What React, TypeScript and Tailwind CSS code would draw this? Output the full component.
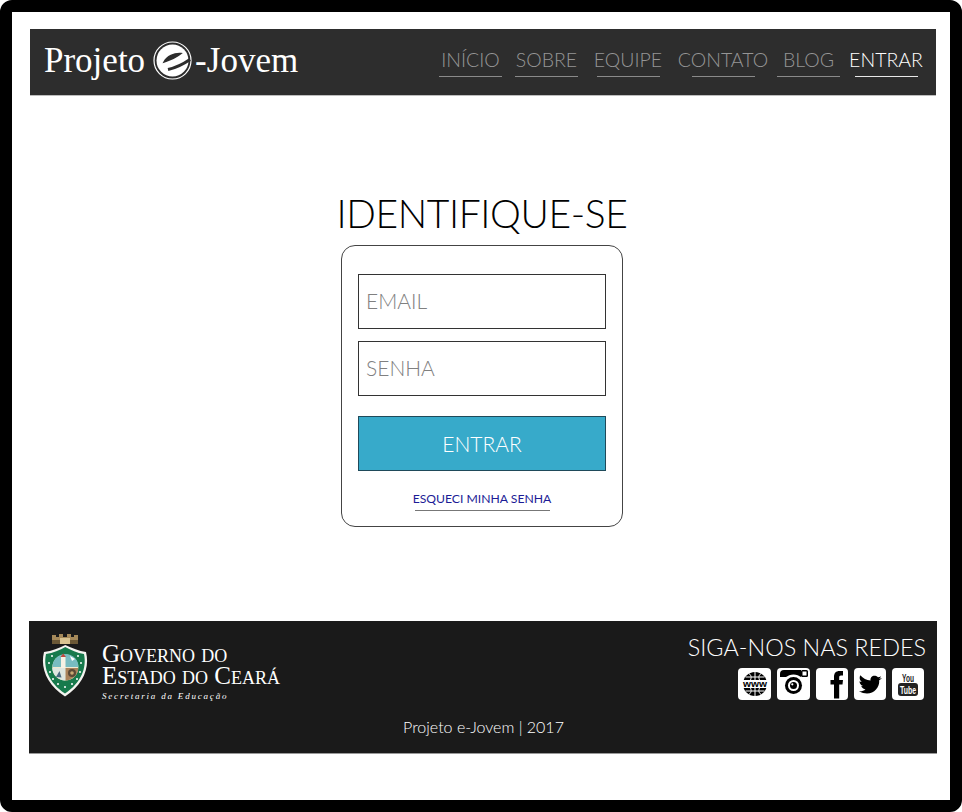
const sans = "font-['Lato','Liberation_Sans',sans-serif]";

function Nav({ label, w, ml, active }: { label: string; w: number; ml: number; active?: boolean }) {
  return (
    <div className="flex flex-col items-center" style={{ width: w, marginLeft: ml }}>
      <span className={`text-[19.5px] leading-[30px] font-light whitespace-nowrap ${active ? "text-white" : "text-[#959595]"}`}>{label}</span>
      <span className={`mt-[1px] h-px w-[63px] ${active ? "bg-[#e8e8e8]" : "bg-[#8a8a8a]"}`} />
    </div>
  );
}

function ELogo() {
  return (
    <svg width="39" height="39" viewBox="0 0 39 39" className="ml-[8px] mr-[3px] shrink-0">
      <circle cx="19.5" cy="19.5" r="18.5" fill="none" stroke="#fff" strokeWidth="1.2" />
      <circle cx="19.5" cy="19.5" r="16" fill="#fff" />
      <path d="M11 21 C14 15 21 12 28 12.500 C24 16 17 19 11 21z" fill="#2d2d2d" stroke="#2d2d2d" strokeWidth="1.500" />
      <path d="M15 28.500 C22 27 29 24 37 18.500" fill="none" stroke="#2d2d2d" strokeWidth="3" />
    </svg>
  );
}

function Crest() {
  const stars: [number, number][] = [[8, 31], [9, 40], [12, 47], [17, 52], [24, 55], [31, 52], [36, 47], [39, 40], [40, 31], [11, 24], [37, 24]];
  return (
    <svg width="48" height="66" viewBox="0 0 48 66" className="shrink-0">
      <path d="M11 3 h4 v2 h3 v-3 h4 v3 h4 v-3 h4 v3 h3 v-2 h4 v6 H11z" fill="#a5895a" />
      <rect x="11" y="8" width="26" height="4" fill="#6b5836" />
      <rect x="19" y="6" width="10" height="6" fill="#d9c391" />
      <path d="M3 20 C11 19 18 16 24.300 13 C31 16 38 19 45 20 C49 36 42 53 24 64.500 C6 53 -1 36 3 20z" fill="#f4f4f0" />
      <path d="M5 22 C12 21 19 18 24.300 15 C30 18 36 21 43 22 C46 36 40 51 24 61.500 C8 51 2 36 5 22z" fill="#177a4c" />
      <circle cx="24.300" cy="35.500" r="13" fill="#f1ead0" />
      <path d="M11.500 35 a13 13 0 0 1 26 0z" fill="#78bcc0" />
      <path d="M24.300 36 h13 a13 13 0 0 1 -13 12.500z" fill="#a9825a" />
      <path d="M11.300 36 h13 v12.500 a13 13 0 0 1 -13 -12.500z" fill="#dfe7e0" />
      <rect x="20" y="25" width="4.500" height="11" fill="#f6f2e4" />
      <path d="M19.500 25 L22.200 21.500 L25 25z" fill="#c0483c" />
      <path d="M29 24 l5 3 l-3 2z" fill="#fff" />
      <circle cx="31" cy="41" r="4" fill="#5b4a36" />
      <circle cx="31" cy="41" r="1.800" fill="#c9a973" />
      <path d="M15 45 l3.500 -6 l2 6.500z" fill="#4a6a80" />
      {stars.map(([x, y]) => (
        <circle key={`${x}-${y}`} cx={x} cy={y} r="1" fill="#fff" />
      ))}
    </svg>
  );
}

function Www() {
  return (
    <svg width="26" height="26" viewBox="0 0 26 26">
      <circle cx="13" cy="13" r="12" fill="#000" />
      <path d="M13 1 v8 M13 17 v8 M7 2.500 C9.500 4.500 9.500 6.500 8.500 9 M19 2.500 C16.500 4.500 16.500 6.500 17.500 9 M7 23.500 C9.500 21.500 9.500 19.500 8.500 17 M19 23.500 C16.500 21.500 16.500 19.500 17.500 17 M3.500 6 H22.500 M3.500 20 H22.500" stroke="#fff" strokeWidth="1" fill="none" />
      <rect x="0" y="9" width="26" height="8" fill="#fff" />
      <text x="13" y="15.800" textAnchor="middle" fontSize="8.500" fontWeight="700" fontFamily="Liberation Sans" fill="#000" textLength="24" lengthAdjust="spacingAndGlyphs">www</text>
    </svg>
  );
}

function Insta() {
  return (
    <svg width="33" height="32" viewBox="0 0 33 32">
      <path d="M3 9 V6 a4 4 0 0 1 4 -4 H24 V9z" fill="#000" />
      <rect x="24" y="2" width="7" height="7" rx="1.500" fill="#000" />
      <rect x="25.500" y="3.500" width="4" height="4" fill="#fff" />
      <circle cx="16.500" cy="17.500" r="11" fill="#fff" />
      <circle cx="16.500" cy="17.500" r="8.500" fill="#000" />
      <circle cx="16.500" cy="17.500" r="5.500" fill="#fff" />
      <circle cx="16.500" cy="17.500" r="3.500" fill="#000" />
      <circle cx="15.300" cy="16.300" r="1.100" fill="#fff" />
    </svg>
  );
}

function Fb() {
  return (
    <svg width="32" height="32" viewBox="0 0 32 32">
      <path d="M18 30.500 V16.500 H14.500 V12 H18 V9 C18 5 20 3 23.500 3 H27 V7.500 H25 C23.500 7.500 23.200 8.200 23.200 9.500 V12 H27 L26.500 16.500 H23.200 V30.500z" fill="#000" />
    </svg>
  );
}

function Tw() {
  return (
    <svg width="32" height="32" viewBox="0 0 32 32">
      <path d="M28 10 c-1 .5 -2 .7 -3 .8 c1 -.7 1.700 -1.500 2 -2.600 c-1 .5 -2 .9 -3 1.100 C20.500 6.200 16 8.200 16.500 12.500 C12.500 12.300 9 10.300 6.300 7.300 C5 9.600 5.700 12.500 7.700 13.800 c-.8 0 -1.500 -.3 -2.200 -.6 c0 2.300 1.600 4.300 3.700 4.800 c-.7 .2 -1.400 .2 -2 .1 c.6 1.900 2.400 3.200 4.300 3.300 C9.800 22.700 7.400 23.400 5 23.100 C15.500 29.800 26 22 25.200 12.300 C26.200 11.600 27.300 10.900 28 10z" fill="#000" />
    </svg>
  );
}

function Yt() {
  return (
    <svg width="32" height="32" viewBox="0 0 32 32">
      <text x="16" y="14" textAnchor="middle" fontSize="11" fontWeight="700" fontFamily="Liberation Sans" fill="#222" textLength="12" lengthAdjust="spacingAndGlyphs">You</text>
      <rect x="6" y="15" width="20" height="13" rx="3" fill="#222" />
      <text x="16" y="25.500" textAnchor="middle" fontSize="10" fontWeight="700" fontFamily="Liberation Sans" fill="#fff" textLength="16" lengthAdjust="spacingAndGlyphs">Tube</text>
    </svg>
  );
}

function Social({ children, wide }: { children: React.ReactNode; wide?: boolean }) {
  return <div className={`flex h-[32px] items-center justify-center overflow-hidden rounded-[4px] bg-white ${wide ? "w-[33px]" : "w-[32px]"}`}>{children}</div>;
}

export default function App() {
  return (
    <div className={`${sans} flex h-[812px] w-[962px] flex-col rounded-[12px] border-[12px] border-black bg-white`}>
      <header className="ml-[18px] mr-[14px] mt-[17px] flex h-[67px] items-center justify-between border-b border-[#bdbdbd] bg-[#2d2d2d] pl-[14px]">
        <div className="mt-[-3px] flex items-center font-['Liberation_Serif',serif] text-[35px] leading-none text-white">
          <span>Projeto</span>
          <ELogo />
          <span>-Jovem</span>
        </div>
        <nav className="mt-[-2px] flex items-start pr-[14px]">
          <Nav label="INÍCIO" w={63} ml={0} />
          <Nav label="SOBRE" w={63} ml={13} />
          <Nav label="EQUIPE" w={64} ml={18} />
          <Nav label="CONTATO" w={88} ml={19} />
          <Nav label="BLOG" w={63} ml={10} />
          <Nav label="ENTRAR" w={72} ml={10} active />
        </nav>
      </header>

      <main className="flex flex-1 flex-col items-center pl-[2px] pt-[91px]">
        <h1 className="text-[39px] font-light leading-[52px] tracking-[-0.4px] text-black">IDENTIFIQUE-SE</h1>
        <form className="mt-[6px] flex w-[282px] flex-col rounded-[14px] border border-[#444] px-[16px] pt-[28px]">
          <div className="flex h-[55px] items-center border border-[#333] pb-[2px] pl-[7px] text-[21px] font-light text-[#808080]">EMAIL</div>
          <div className="mt-[12px] flex h-[55px] items-center border border-[#333] pb-[2px] pl-[7px] text-[21px] font-light text-[#808080]">SENHA</div>
          <button type="button" className="mt-[20px] h-[55px] border border-[#1f4a5a] bg-[#37aaca] text-[21px] font-light text-white">ENTRAR</button>
          <div className="mb-[15px] mt-[19px] flex flex-col items-center">
            <span className="text-[12.2px] leading-[18px] text-[#1c1c96]">ESQUECI MINHA SENHA</span>
            <span className="mt-[2px] h-px w-[135px] bg-[#777]" />
          </div>
        </form>
      </main>

      <footer className="mb-[46px] ml-[17px] mr-[13px] flex h-[133px] flex-col border-b border-[#999] bg-[#1a1a1a] pl-[12px] pr-[11px]">
        <div className="flex items-start justify-between">
          <div className="flex items-start pt-[11px]">
            <Crest />
            <div className="ml-[13px] mt-[11px] font-['Liberation_Serif',serif] text-white">
              <div className="text-[25px] leading-[22px] [font-variant:small-caps]">Governo do</div>
              <div className="text-[25px] leading-[22px] [font-variant:small-caps] whitespace-nowrap">Estado do Ceará</div>
              <div className="mt-[3px] text-[9px] italic leading-[12px] tracking-[1.8px]">Secretaria da Educação</div>
            </div>
          </div>
          <div className="flex flex-col items-end pt-[11px]">
            <div className="text-[23.4px] font-light leading-[30px] text-white">SIGA-NOS NAS REDES</div>
            <div className="mr-[2px] mt-[6px] flex gap-[6px]">
              <Social wide><Www /></Social>
              <Social wide><Insta /></Social>
              <Social><Fb /></Social>
              <Social><Tw /></Social>
              <Social><Yt /></Social>
            </div>
          </div>
        </div>
        <div className="mt-[13px] text-center text-[16px] font-light leading-[24px] text-white">Projeto e-Jovem | 2017</div>
      </footer>
    </div>
  );
}
